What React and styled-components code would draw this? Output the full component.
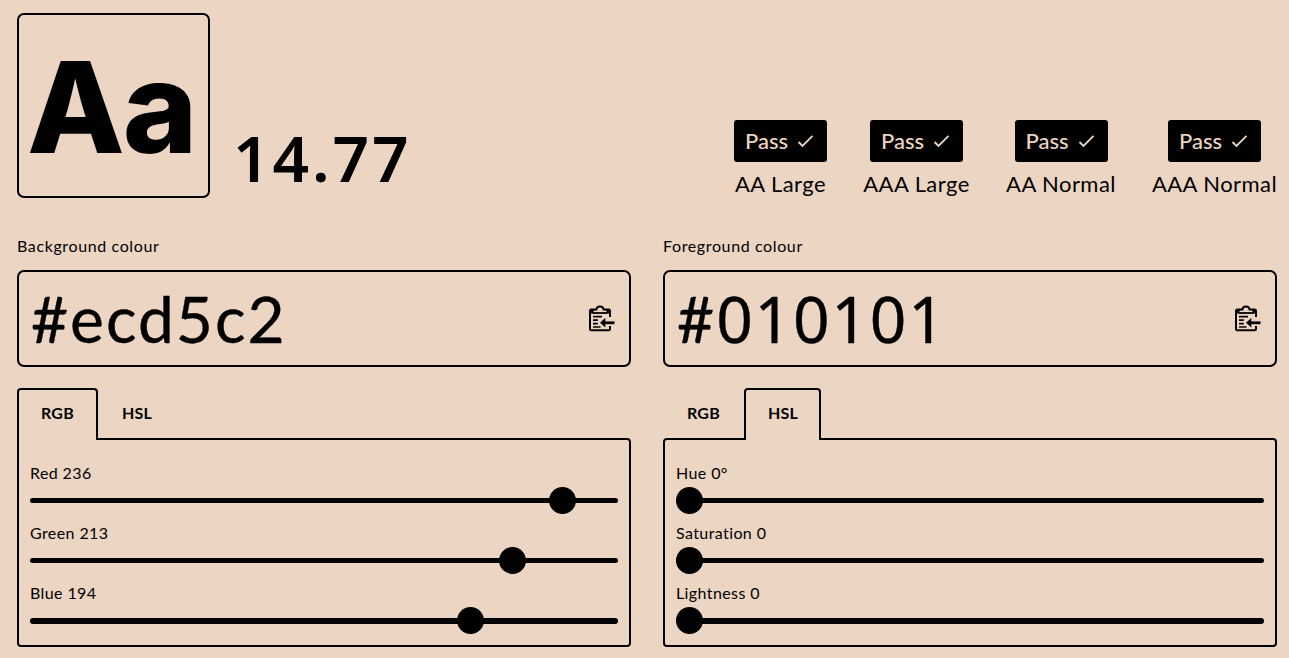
import React from 'react';
import styled, { createGlobalStyle } from 'styled-components';

const BG = '#ecd5c2';
const FG = '#010101';

const Global = createGlobalStyle`
  * { box-sizing: border-box; }
  body {
    margin: 0;
    background: ${BG};
    color: ${FG};
    font-family: Lato, "Noto Sans", sans-serif;
    font-size: 16px;
    overflow: hidden;
  }
`;

const Page = styled.main`
  height: 658px;
  padding: 13px 12px 0 17px;
`;

const Header = styled.header`
  display: flex;
  align-items: flex-end;
  height: 185px;
`;

const Preview = styled.div`
  width: 193px;
  height: 185px;
  border: 2px solid ${FG};
  border-radius: 7px;
  padding-left: 8px;
  font-family: Inter, sans-serif;
  font-size: 127px;
  font-weight: 800;
  line-height: 185px;
  letter-spacing: -2px;
  white-space: nowrap;
`;

const Ratio = styled.div`
  margin-left: 23px;
  height: 78px;
  line-height: 75px;
  font-family: "Noto Sans", sans-serif;
  font-size: 64px;
  font-weight: 600;
  letter-spacing: 2.9px;
`;

const Results = styled.div`
  display: flex;
  gap: 36px;
  height: 78px;
  margin-left: auto;
`;

const Result = styled.div`
  display: flex;
  flex-direction: column;
  align-items: center;
  width: ${(p) => p.$width}px;
`;

const Badge = styled.div`
  display: flex;
  align-items: center;
  width: 93px;
  height: 42px;
  padding: 0 0 1px 11px;
  gap: 9px;
  border-radius: 3px;
  background: ${FG};
  color: ${BG};
  font-size: 22px;
  font-weight: 500;
`;

const ResultLabel = styled.div`
  height: 36px;
  line-height: 43px;
  font-size: 22px;
  letter-spacing: 0.45px;
  white-space: nowrap;
`;

const Columns = styled.div`
  display: grid;
  grid-template-columns: 1fr 1fr;
  gap: 32px;
  margin-top: 36px;
`;

const FieldLabel = styled.div`
  height: 36px;
  line-height: 23px;
  letter-spacing: 0.62px;
`;

const Field = styled.div`
  display: flex;
  align-items: center;
  justify-content: space-between;
  height: 97px;
  padding: 0 13px 0 12px;
  border: 2px solid ${FG};
  border-radius: 7px;
`;

const Hex = styled.span`
  font-size: 64px;
  line-height: 88px;
  letter-spacing: 2px;
  -webkit-text-stroke: 0.4px ${FG};
`;

const Digits = styled.span`
  font-family: "Noto Sans", sans-serif;
  letter-spacing: 1.8px;
`;

const Tabs = styled.div`
  display: flex;
  height: 52px;
  margin-top: 21px;
  margin-bottom: -2px;
  position: relative;
`;

const Tab = styled.div`
  width: ${(p) => p.$width}px;
  padding-left: 22px;
  border: 2px solid ${(p) => (p.$active ? FG : 'transparent')};
  border-bottom: 0;
  border-radius: 4px 4px 0 0;
  background: ${(p) => (p.$active ? BG : 'transparent')};
  font-weight: 700;
  line-height: 46px;
  letter-spacing: 0.2px;
`;

const Panel = styled.div`
  height: 209px;
  padding: 19px 11px 0;
  border: 2px solid ${FG};
  border-radius: ${(p) => (p.$square ? '0 4px 4px 4px' : '4px')};
`;

const SliderRow = styled.div`
  height: 60px;
`;

const SliderLabel = styled.div`
  height: 28px;
  line-height: 28px;
  letter-spacing: 0.4px;
`;

const Slider = styled.div`
  display: grid;
  grid-template-rows: 27px;
  align-items: center;
`;

const Track = styled.div`
  grid-area: 1 / 1;
  height: ${(p) => p.$thickness}px;
  margin-top: ${(p) => p.$thickness - 5}px;
  border-radius: 3px;
  background: ${FG};
`;

const Thumb = styled.div`
  grid-area: 1 / 1;
  width: 27px;
  height: 27px;
  border-radius: 50%;
  background: ${FG};
`;

const Check = () => (
  <svg width="18" height="16" viewBox="0 0 18 16" fill="none" stroke="currentColor" strokeWidth="1.8">
    <path d="M1.5 9 5.5 13 15.5 2.8" />
  </svg>
);

const PasteIcon = () => (
  <svg width="28" height="27" viewBox="0 0 28 27" fill="none" stroke={FG} strokeWidth="2">
    <path d="M22 12V6Q22 4.6 20.6 4.6H15.6C15.2 .4 8.8 .4 8.4 4.6H3.4Q2 4.6 2 6V24Q2 25.2 3.2 25.2H20.8Q22 25.2 22 24V21" />
    <path d="M2 4.6h5.5Q5 5.8 4.9 8.6H2zM22 4.6h-5.5Q19 5.8 19.1 8.6H22z" fill={FG} stroke="none" />
    <path d="M4.5 8H19.5" strokeWidth="1.8" />
    <path d="M5 11.6h9M5 15.2h4.8M5 18.6h4.8M5 22h7.5" strokeWidth="1.7" />
    <path d="M16 17.8H26.5" strokeWidth="2.8" />
    <path d="M12 17.8 17.3 13V22.6z" fill={FG} stroke="none" />
  </svg>
);

const results = [
  ['AA Large', 93],
  ['AAA Large', 107],
  ['AA Normal', 110],
  ['AAA Normal', 125],
];

const columns = [
  {
    label: 'Background colour', hex: <>#ecd5c2</>, active: 'RGB',
    sliders: [['Red 236', 236 / 255], ['Green 213', 213 / 255], ['Blue 194', 194 / 255]],
  },
  {
    label: 'Foreground colour', hex: <>#<Digits>010101</Digits></>, active: 'HSL',
    sliders: [['Hue 0°', 0], ['Saturation 0', 0], ['Lightness 0', 0]],
  },
];

export default function App() {
  return (
    <>
      <Global />
      <Page>
        <Header>
          <Preview>Aa</Preview>
          <Ratio>14.77</Ratio>
          <Results>
            {results.map(([name, width]) => (
              <Result key={name} $width={width}>
                <Badge>Pass <Check /></Badge>
                <ResultLabel>{name}</ResultLabel>
              </Result>
            ))}
          </Results>
        </Header>
        <Columns>
          {columns.map((c) => (
            <section key={c.label}>
              <FieldLabel>{c.label}</FieldLabel>
              <Field>
                <Hex>{c.hex}</Hex>
                <PasteIcon />
              </Field>
              <Tabs>
                <Tab $width={81} $active={c.active === 'RGB'}>RGB</Tab>
                <Tab $width={77} $active={c.active === 'HSL'}>HSL</Tab>
              </Tabs>
              <Panel $square={c.active === 'RGB'}>
                {c.sliders.map(([name, value], i) => (
                  <SliderRow key={name}>
                    <SliderLabel>{name}</SliderLabel>
                    <Slider>
                      <Track $thickness={i === 2 ? 6 : 5} />
                      <Thumb style={{ marginLeft: `calc((100% - 27px) * ${value})` }} />
                    </Slider>
                  </SliderRow>
                ))}
              </Panel>
            </section>
          ))}
        </Columns>
      </Page>
    </>
  );
}
